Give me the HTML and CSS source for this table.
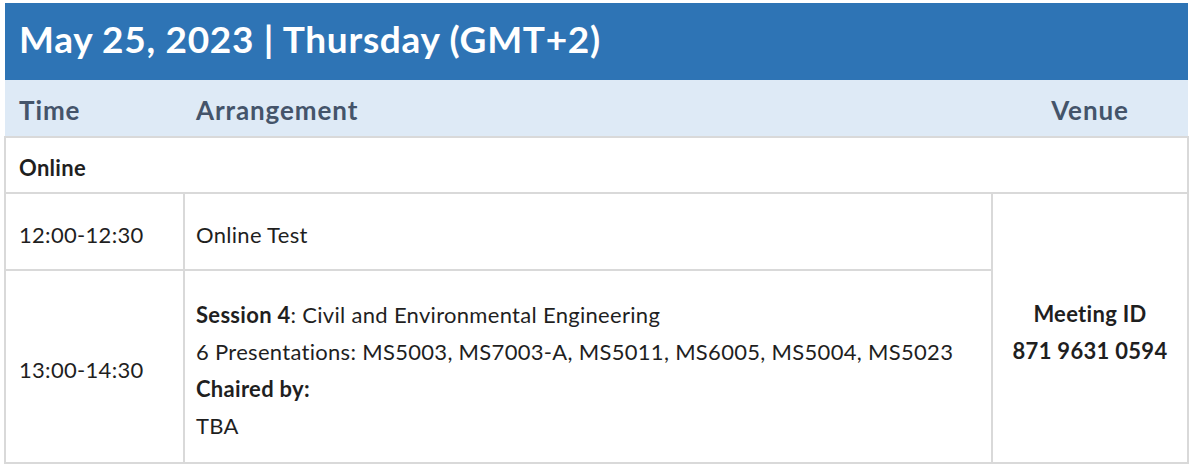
FILE: index.html
```html
<!DOCTYPE html>
<html lang="en">
<head>
<meta charset="utf-8">
<title>Schedule</title>
<link rel="stylesheet" href="styles.css">
</head>
<body>
<div class="schedule">
  <div class="day-title">May 25, 2023 | Thursday (GMT+2)</div>
  <table class="grid">
    <colgroup>
      <col class="c-time">
      <col class="c-arr">
      <col class="c-venue">
    </colgroup>
    <thead>
      <tr class="head-row">
        <th class="h-time">Time</th>
        <th class="h-arr">Arrangement</th>
        <th class="h-venue">Venue</th>
      </tr>
    </thead>
    <tbody>
      <tr class="group-row">
        <td colspan="3" class="group">Online</td>
      </tr>
      <tr class="row-short">
        <td class="time">12:00-12:30</td>
        <td class="arr">Online Test</td>
        <td class="venue" rowspan="2"><strong>Meeting ID<br>871 9631 0594</strong></td>
      </tr>
      <tr class="row-tall">
        <td class="time">13:00-14:30</td>
        <td class="arr session">
          <strong>Session 4</strong>: Civil and Environmental Engineering<br>
          6 Presentations: MS5003, MS7003-A, MS5011, MS6005, MS5004, MS5023<br>
          <strong>Chaired by:</strong><br>
          TBA
        </td>
      </tr>
    </tbody>
  </table>
</div>
</body>
</html>
```
FILE: styles.css
```css
html, body {
  margin: 0;
  padding: 0;
  background: #ffffff;
}
body {
  font-family: Lato, "Open Sans", "Liberation Sans", sans-serif;
  color: #1f1f1f;
}
.schedule {
  margin: 3px 0 0 5px;
  width: 1183px;
}
.day-title {
  background: #2e74b5;
  color: #ffffff;
  font-weight: 700;
  font-size: 37px;
  letter-spacing: 0.7px;
  height: 77px;
  line-height: 72px;
  padding: 0 0 5px 14px;
  box-sizing: border-box;
}
.grid {
  width: 1183px;
  border-collapse: collapse;
  table-layout: fixed;
  margin-left: -1px;
}
.c-time { width: 179px; }
.c-arr { width: 808px; }
.c-venue { width: 196px; }
.head-row th {
  background: #deeaf6;
  color: #44546a;
  font-size: 26px;
  letter-spacing: 0.9px;
  font-weight: 700;
  height: 53px;
  padding: 3px 0 0 14px;
  text-align: left;
  vertical-align: middle;
}
.head-row .h-arr { padding-left: 12px; }
.head-row .h-venue { text-align: center; padding: 3px 0 0 0; }
tbody td {
  border: 2px solid #d9d9d9;
  font-size: 22px;
  letter-spacing: 0.3px;
  vertical-align: middle;
  padding: 6px 12px 0 13px;
}
.group {
  height: 50px;
  font-weight: 700;
}
.group-row td { padding-top: 4px; height: 50px; }
.row-short td { height: 69px; }
.row-tall td { height: 185px; }
.arr { padding-left: 11px; }
.session { line-height: 37px; }
.venue {
  text-align: center;
  line-height: 37px;
}
tbody td.venue { padding: 8px 0 0 0; }
.venue strong { font-weight: 700; }
```
